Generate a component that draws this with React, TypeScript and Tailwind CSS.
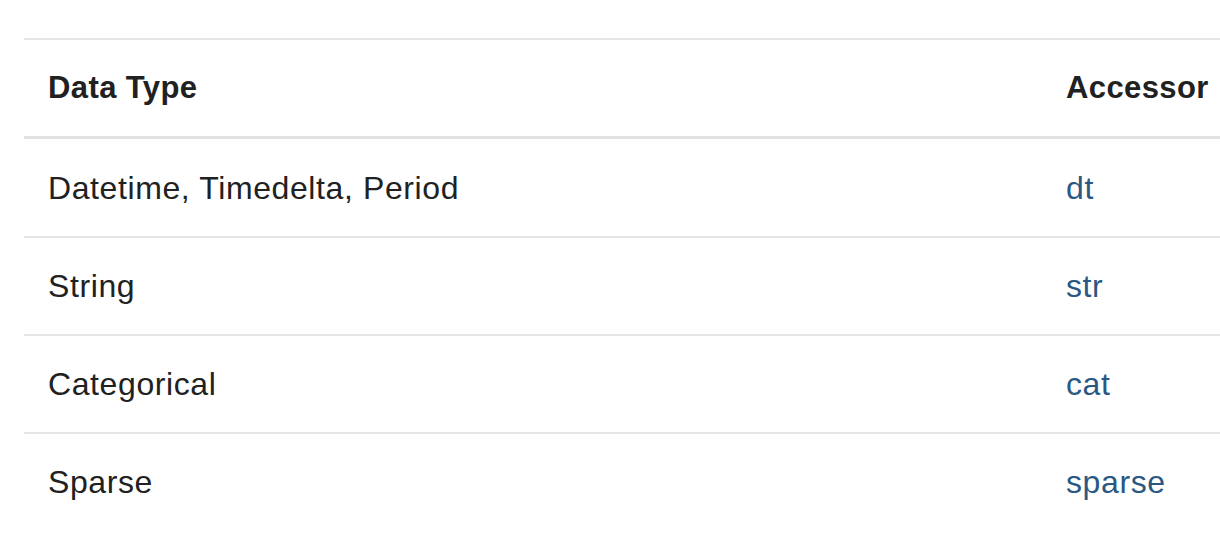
const ROWS = [
  { type: "Datetime, Timedelta, Period", accessor: "dt" },
  { type: "String", accessor: "str" },
  { type: "Categorical", accessor: "cat" },
  { type: "Sparse", accessor: "sparse" },
];

export default function App() {
  return (
    <div className="h-[542px] w-[1220px] overflow-hidden bg-white font-['Liberation_Sans',Arial,sans-serif] text-[#212121]">
      <div className="ml-6 mt-[38px] w-[1320px] border-t-2 border-[#e6e6e6]">
        <div className="grid h-[99px] grid-cols-[1018px_1fr] items-center border-b-[3px] border-[#e1e1e1] text-[31px] font-bold tracking-[0.4px]">
          <div className="pl-6">Data Type</div>
          <div className="pl-6">Accessor</div>
        </div>
        {ROWS.map((row, i) => (
          <div
            key={row.accessor}
            className={
              i === 0
                ? "grid h-[99px] grid-cols-[1018px_1fr] items-center border-b-2 border-[#e6e6e6] text-[32px] tracking-[0.6px]"
                : i === ROWS.length - 1
                  ? "grid h-[96px] grid-cols-[1018px_1fr] items-center text-[32px] tracking-[0.6px]"
                  : "grid h-[98px] grid-cols-[1018px_1fr] items-center border-b-2 border-[#e6e6e6] text-[32px] tracking-[0.6px]"
            }
          >
            <div className="pl-6">{row.type}</div>
            <div className="pl-6">
              <a href="#" className="text-[#2a5883]">
                {row.accessor}
              </a>
            </div>
          </div>
        ))}
      </div>
    </div>
  );
}
